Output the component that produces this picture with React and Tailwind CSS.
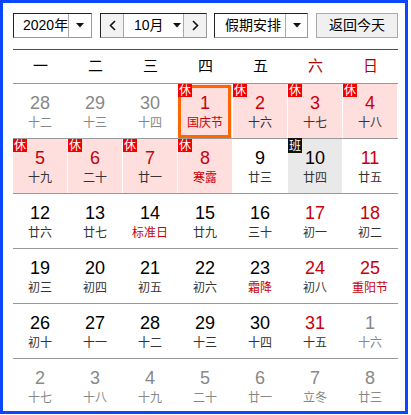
import React from 'react';

const NUM = { fontFamily: '"Liberation Sans", Arial, sans-serif' };
const CJK = { fontFamily: '"Liberation Sans", "Noto Sans CJK SC", sans-serif' };

// o: other month, h: 休, w: 班, f: red lunar text, s: selected
const weeks = [
  [
    { d: 28, l: '十二', o: 1 }, { d: 29, l: '十三', o: 1 }, { d: 30, l: '十四', o: 1 },
    { d: 1, l: '国庆节', h: 1, f: 1, s: 1 }, { d: 2, l: '十六', h: 1 }, { d: 3, l: '十七', h: 1 }, { d: 4, l: '十八', h: 1 },
  ],
  [
    { d: 5, l: '十九', h: 1 }, { d: 6, l: '二十', h: 1 }, { d: 7, l: '廿一', h: 1 }, { d: 8, l: '寒露', h: 1, f: 1 },
    { d: 9, l: '廿三' }, { d: 10, l: '廿四', w: 1 }, { d: 11, l: '廿五' },
  ],
  [
    { d: 12, l: '廿六' }, { d: 13, l: '廿七' }, { d: 14, l: '标准日', f: 1 }, { d: 15, l: '廿九' },
    { d: 16, l: '三十' }, { d: 17, l: '初一' }, { d: 18, l: '初二' },
  ],
  [
    { d: 19, l: '初三' }, { d: 20, l: '初四' }, { d: 21, l: '初五' }, { d: 22, l: '初六' },
    { d: 23, l: '霜降', f: 1 }, { d: 24, l: '初八' }, { d: 25, l: '重阳节', f: 1 },
  ],
  [
    { d: 26, l: '初十' }, { d: 27, l: '十一' }, { d: 28, l: '十二' }, { d: 29, l: '十三' },
    { d: 30, l: '十四' }, { d: 31, l: '十五' }, { d: 1, l: '十六', o: 1 },
  ],
  [
    { d: 2, l: '十七', o: 1 }, { d: 3, l: '十八', o: 1 }, { d: 4, l: '十九', o: 1 }, { d: 5, l: '二十', o: 1 },
    { d: 6, l: '廿一', o: 1 }, { d: 7, l: '立冬', o: 1 }, { d: 8, l: '廿三', o: 1 },
  ],
];

const Caret = () => (
  <svg width="8" height="5" viewBox="0 0 8 5">
    <path d="M0 0H8L4 4.5Z" fill="#111" />
  </svg>
);

const Chevron = ({ dir }) => (
  <svg width="7" height="11" viewBox="0 0 7 11">
    <path
      d={dir === 'left' ? 'M6 1L1.5 5.5L6 10' : 'M1 1L5.5 5.5L1 10'}
      fill="none"
      stroke="#111"
      strokeWidth="1.6"
    />
  </svg>
);

const DayCell = ({ day, col }) => {
  const weekend = col >= 5;
  let numColor = 'text-black';
  if (day.o) numColor = 'text-[#888]';
  else if (day.w) numColor = 'text-black';
  else if (day.h || weekend) numColor = 'text-[#c8000a]';

  let lunarColor = 'text-[#333]';
  if (day.o) lunarColor = 'text-[#888]';
  else if (day.f) lunarColor = 'text-[#c8000a]';

  let bg = '';
  if (day.h) bg = 'bg-[#ffdede]';
  if (day.w) bg = 'bg-[#e9e9e9]';

  return (
    <div className={`relative h-[54px] w-[54px] ${bg}`}>
      {day.s && (
        <div className="absolute left-0 top-px h-[53px] w-[53px] border-[3px] border-[#ff6600]"></div>
      )}
      <div className="flex flex-col items-center pt-[10px]">
        <span className={`text-[18px] leading-[18px] ${numColor}`} style={NUM}>{day.d}</span>
        <span className={`mt-[4px] text-[12px] leading-[14px] ${lunarColor}`} style={CJK}>{day.l}</span>
      </div>
      {day.h && (
        <span className="absolute left-0 top-0 flex h-[13px] w-[14px] items-center justify-center bg-[#f00000] text-[12px] leading-none text-white" style={CJK}>休</span>
      )}
      {day.w && (
        <span className="absolute left-0 -top-px flex h-[15px] w-[14px] items-center justify-center bg-[#111] text-[12px] leading-none text-white" style={CJK}>班</span>
      )}
    </div>
  );
};

export default function App() {
  const weekdays = ['一', '二', '三', '四', '五', '六', '日'];

  return (
    <div className="h-[414px] w-[408px] border-[3px] border-[#0a47ff] bg-white pl-[10px] pt-[10px]" style={CJK}>
      <div className="w-[385px]">
        {/* toolbar */}
        <div className="flex h-[25px] items-stretch whitespace-nowrap text-[14px] text-black">
          <div className="flex w-[79px] border-b border-l border-r border-t border-b-[#999] border-l-[#222] border-r-[#999] border-t-[#222]">
            <span className="flex w-[54px] items-center pl-[9px]">2020年</span>
            <span className="flex flex-1 items-center justify-center border-l border-[#aaa]"><Caret /></span>
          </div>

          <div className="ml-[8px] flex w-[107px] border-b border-l border-r border-t border-b-[#999] border-l-[#222] border-r-[#999] border-t-[#222]">
            <span className="flex w-[22px] items-center justify-center bg-[#f2f2f2]"><Chevron dir="left" /></span>
            <span className="flex w-[61px] items-center border-l border-r border-[#aaa] pl-[10px]">
              10月
              <span className="ml-[9px] flex items-center"><Caret /></span>
            </span>
            <span className="flex flex-1 items-center justify-center bg-[#f2f2f2]"><Chevron dir="right" /></span>
          </div>

          <div className="ml-[7px] flex w-[94px] border-b border-l border-r border-t border-b-[#999] border-l-[#222] border-r-[#999] border-t-[#222]">
            <span className="flex w-[70px] items-center pl-[10px]">假期安排</span>
            <span className="flex flex-1 items-center justify-center border-l border-[#aaa]"><Caret /></span>
          </div>

          <button className="ml-[8px] flex w-[82px] items-center justify-center border border-[#aaa] bg-[#f0f0f0] text-[14px]">
            返回今天
          </button>
        </div>

        <div className="mt-[11px] h-px bg-[#1f4fd6]"></div>

        {/* weekday header */}
        <div className="grid h-[33px] grid-cols-7 items-center text-[15px]">
          {weekdays.map((w, i) => (
            <span key={w} className={`text-center ${i >= 5 ? 'text-[#b40000]' : 'text-black'}`}>{w}</span>
          ))}
        </div>

        {weeks.map((week, r) => (
          <div key={r} className="border-t border-[#999]">
            <div className="grid grid-cols-7">
              {week.map((day, c) => (
                <DayCell key={c} day={day} col={c} />
              ))}
            </div>
          </div>
        ))}
      </div>
    </div>
  );
}
